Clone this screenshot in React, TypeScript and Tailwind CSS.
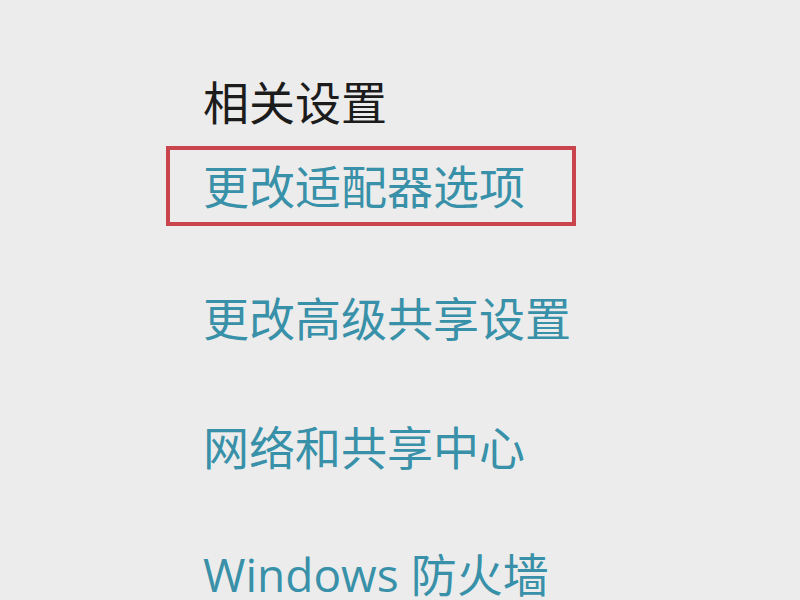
import React from 'react';

const links = [
    { text: '更改高级共享设置', cls: 'mt-[64px] h-[56px]' },
    { text: '网络和共享中心', cls: 'mt-[73px] h-[56px]' },
    { text: 'Windows 防火墙', cls: 'mt-[74px] h-[50px]' },
];

const App: React.FC = () => {
    return (
        <div
            className="w-[800px] h-[600px] overflow-hidden bg-[#ececec] pl-[166px]"
            style={{ fontFamily: '"Open Sans", "Noto Sans CJK SC", sans-serif' }}
        >
            <div className="flex flex-col">
                <div className="h-[56px] mt-[74px] pl-[37px] flex items-center text-[46px] leading-none text-[#1c1c1c]">
                    相关设置
                </div>
                <div className="mt-[16px] w-[410px] h-[80px] border-4 border-[#c9444c] pl-[33px] flex items-center text-[46px] leading-none text-[#3891a8]">
                    更改适配器选项
                </div>
                {links.map((l) => (
                    <div
                        key={l.text}
                        className={`${l.cls} pl-[37px] flex items-center text-[46px] leading-none text-[#3891a8]`}
                    >
                        {l.text}
                    </div>
                ))}
            </div>
        </div>
    );
};

export default App;
